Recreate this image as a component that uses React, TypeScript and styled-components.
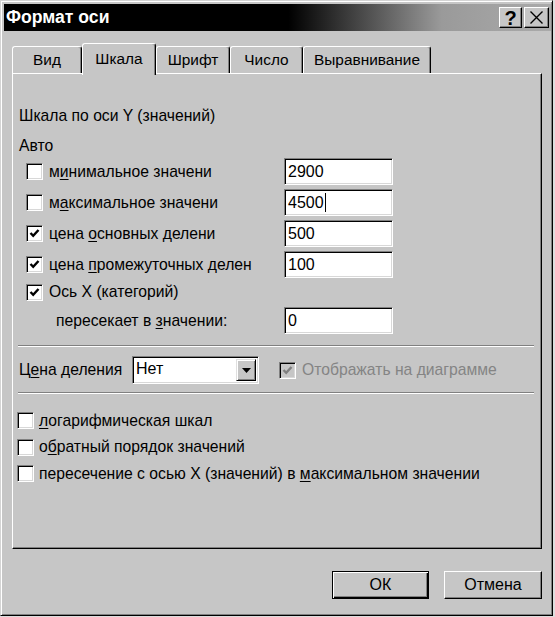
import React from 'react';
import styled, { createGlobalStyle } from 'styled-components';

const FONT = `"Liberation Sans", Arial, sans-serif`;
const BG = '#c6c6c6';

const Global = createGlobalStyle`
  html, body { margin: 0; padding: 0; background: #dedede; }
  body { font-family: ${FONT}; }
  #root { width: 555px; height: 617px; }
`;

const Window = styled.div`
  box-sizing: border-box;
  width: 553px;
  height: 616px;
  background: ${BG};
  border: 1px solid;
  border-color: #d4d4d4 #000 #000 #d4d4d4;
  box-shadow: inset 1px 1px #fff, inset -1px -1px #808080;
  padding: 3px 1px 2px 3px;
  display: flex;
  flex-direction: column;
  font-family: ${FONT};
  font-size: 15.7px;
  color: #000;
`;

const TitleBar = styled.div`
  height: 27px;
  display: flex;
  align-items: center;
  background: linear-gradient(to right, #000 0%, #000 52%, #9a9a9a 80%, #aaaaaa 100%);
  padding: 0 2px 0 2px;
`;

const TitleText = styled.div`
  flex: 1;
  color: #fff;
  font-weight: bold;
  font-size: 17.6px;
`;

const TitleButtons = styled.div`
  display: flex;
  gap: 2px;
`;

const TitleButton = styled.div<{ $w: number }>`
  box-sizing: border-box;
  width: ${(p) => p.$w}px;
  height: 21px;
  background: ${BG};
  border: 1px solid;
  border-color: #fff #000 #000 #fff;
  box-shadow: inset -1px -1px #808080;
  display: flex;
  align-items: center;
  justify-content: center;
  font-weight: bold;
  font-size: 20px;
  line-height: 1;
`;

const TabRow = styled.div`
  display: flex;
  align-items: flex-end;
  margin: 12px 0 0 8px;
  height: 30px;
  position: relative;
  z-index: 1;
`;

const Tab = styled.div<{ $w: number; $active?: boolean }>`
  box-sizing: border-box;
  width: ${(p) => p.$w}px;
  height: ${(p) => (p.$active ? 32 : 27)}px;
  margin-bottom: ${(p) => (p.$active ? -2 : 0)}px;
  background: ${BG};
  border-top: 1px solid #fff;
  border-left: 1px solid #fff;
  border-right: 1px solid #000;
  box-shadow: inset -1px 0 #808080;
  border-radius: 3px 3px 0 0;
  display: flex;
  align-items: center;
  justify-content: center;
  font-size: 15.4px;
  padding-bottom: ${(p) => (p.$active ? 1 : 0)}px;
`;

const Panel = styled.div`
  box-sizing: border-box;
  margin-left: 8px;
  width: 530px;
  height: 476px;
  border: 1px solid;
  border-color: #fff #000 #000 #fff;
  box-shadow: inset -1px -1px #808080;
  padding: 32px 0 0 4px;
  display: flex;
  flex-direction: column;
`;

const Heading = styled.div<{ $mt?: number }>`
  height: 20px;
  line-height: 20px;
  margin-left: 2px;
  margin-top: ${(p) => p.$mt ?? 0}px;
`;

const Row = styled.div<{ $h?: number; $mt?: number; $ml?: number }>`
  display: flex;
  align-items: center;
  height: ${(p) => p.$h ?? 27}px;
  margin-top: ${(p) => p.$mt ?? 0}px;
  margin-left: ${(p) => p.$ml ?? 0}px;
`;

const Label = styled.span<{ $w?: number; $ml?: number; $disabled?: boolean }>`
  ${(p) => (p.$w ? `width: ${p.$w}px; flex: none;` : '')}
  margin-left: ${(p) => p.$ml ?? 6}px;
  white-space: nowrap;
  color: ${(p) => (p.$disabled ? '#848484' : '#000')};
`;

const U = styled.span`
  text-decoration: underline;
  text-underline-offset: 2px;
`;

const Box = styled.span<{ $disabled?: boolean }>`
  box-sizing: border-box;
  flex: none;
  width: 17px;
  height: 17px;
  border: 1px solid;
  border-color: #808080 #fff #fff #808080;
  box-shadow: inset 1px 1px #000, inset -1px -1px #d8d8d8;
  background: ${(p) => (p.$disabled ? BG : '#fff')};
  display: flex;
  align-items: center;
  justify-content: center;
`;

const Field = styled.div<{ $w?: number }>`
  box-sizing: border-box;
  width: ${(p) => p.$w ?? 109}px;
  height: 27px;
  border: 1px solid;
  border-color: #808080 #fff #fff #808080;
  box-shadow: inset 1px 1px #000, inset -1px -1px #d8d8d8;
  background: #fff;
  padding: 0 3px;
  display: flex;
  align-items: center;
  font-size: 16px;
`;

const Caret = styled.span`
  display: inline-block;
  width: 1px;
  height: 19px;
  background: #000;
  margin-left: 1px;
`;

const Separator = styled.div<{ $mt: number }>`
  height: 0;
  border-top: 1px solid #808080;
  border-bottom: 1px solid #fff;
  margin: ${(p) => p.$mt}px 7px 0 1px;
`;

const Combo = styled.div`
  box-sizing: border-box;
  width: 127px;
  height: 28px;
  flex: none;
  border: 1px solid;
  border-color: #808080 #fff #fff #808080;
  box-shadow: inset 1px 1px #000, inset -1px -1px #d8d8d8;
  background: #fff;
  padding: 2px 2px 2px 3px;
  display: flex;
  align-items: stretch;
`;

const ComboText = styled.span`
  flex: 1;
  font-size: 16px;
  line-height: 20px;
`;

const ComboButton = styled.span`
  box-sizing: border-box;
  width: 20px;
  background: ${BG};
  border: 1px solid;
  border-color: #dfdfdf #000 #000 #dfdfdf;
  box-shadow: inset 1px 1px #fff, inset -1px -1px #808080;
  display: flex;
  align-items: center;
  justify-content: center;
`;

const ButtonRow = styled.div`
  display: flex;
  justify-content: flex-end;
  gap: 15px;
  margin: 22px 0 0 8px;
  width: 530px;
`;

const Button = styled.div<{ $default?: boolean; $w: number }>`
  box-sizing: border-box;
  width: ${(p) => p.$w}px;
  height: 28px;
  background: ${BG};
  border: 1px solid;
  border-color: ${(p) => (p.$default ? '#000' : '#fff #000 #000 #fff')};
  box-shadow: ${(p) =>
    p.$default
      ? 'inset 1px 1px #fff, inset -1px -1px #000, inset -2px -2px #808080'
      : 'inset -1px -1px #808080'};
  display: flex;
  align-items: center;
  justify-content: center;
  font-size: 16px;
`;

const Check: React.FC<{ color?: string }> = ({ color = '#000' }) => (
  <svg width="11" height="11" viewBox="0 0 11 11">
    <polyline points="1.5,5 4.2,7.8 9.5,2" fill="none" stroke={color} strokeWidth="2.4" />
  </svg>
);

const CheckBox: React.FC<{ checked?: boolean; disabled?: boolean }> = ({ checked, disabled }) => (
  <Box $disabled={disabled}>{checked && <Check color={disabled ? '#808080' : '#000'} />}</Box>
);

const tabs = [
  { label: 'Вид', w: 70 },
  { label: 'Шкала', w: 74, active: true },
  { label: 'Шрифт', w: 74 },
  { label: 'Число', w: 73 },
  { label: 'Выравнивание', w: 128 },
];

export default function App() {
  return (
    <>
      <Global />
      <Window>
        <TitleBar>
          <TitleText>Формат оси</TitleText>
          <TitleButtons>
            <TitleButton $w={23}>?</TitleButton>
            <TitleButton $w={25}>
              <svg width="15" height="13" viewBox="0 0 15 13">
                <path d="M1.5 0.5 L13.5 12.5 M13.5 0.5 L1.5 12.5" stroke="#000" strokeWidth="1.4" />
              </svg>
            </TitleButton>
          </TitleButtons>
        </TitleBar>

        <TabRow>
          {tabs.map((t) => (
            <Tab key={t.label} $w={t.w} $active={t.active}>
              {t.label}
            </Tab>
          ))}
        </TabRow>

        <Panel>
          <Heading>Шкала по оси Y (значений)</Heading>
          <Heading $mt={10}>Авто</Heading>

          <Row $ml={9} $mt={2}>
            <CheckBox />
            <Label $w={235}>
              м<U>и</U>нимальное значени
            </Label>
            <Field>2900</Field>
          </Row>
          <Row $ml={9} $mt={4}>
            <CheckBox />
            <Label $w={235}>
              м<U>а</U>ксимальное значени
            </Label>
            <Field>
              4500
              <Caret />
            </Field>
          </Row>
          <Row $ml={9} $mt={4}>
            <CheckBox checked />
            <Label $w={235}>
              цена <U>о</U>сновных делени
            </Label>
            <Field>500</Field>
          </Row>
          <Row $ml={9} $mt={4}>
            <CheckBox checked />
            <Label $w={235}>
              цена <U>п</U>ромежуточных делен
            </Label>
            <Field>100</Field>
          </Row>
          <Row $ml={9} $mt={3} $h={22}>
            <CheckBox checked />
            <Label>Ось X (категорий)</Label>
          </Row>
          <Row $ml={9} $mt={4}>
            <Label $w={228} $ml={30}>
              пересекает в <U>з</U>начении:
            </Label>
            <Field>0</Field>
          </Row>

          <Separator $mt={11} />

          <Row $h={28} $mt={9} $ml={2}>
            <Label $w={113} $ml={0}>
              Ц<U>е</U>на деления
            </Label>
            <Combo>
              <ComboText>Нет</ComboText>
              <ComboButton>
                <svg width="9" height="5" viewBox="0 0 9 5">
                  <path d="M0 0 H9 L4.5 5 Z" fill="#000" />
                </svg>
              </ComboButton>
            </Combo>
            <Row $ml={20}>
              <CheckBox checked disabled />
              <Label $disabled>Отображать на диаграмме</Label>
            </Row>
          </Row>

          <Separator $mt={8} />

          <Row $mt={13}>
            <CheckBox />
            <Label $ml={5}>
              <U>л</U>огарифмическая шкал
            </Label>
          </Row>
          <Row $h={26}>
            <CheckBox />
            <Label $ml={5}>
              о<U>б</U>ратный порядок значений
            </Label>
          </Row>
          <Row $h={27}>
            <CheckBox />
            <Label $ml={5}>
              пересечение с осью X (значений) в <U>м</U>аксимальном значении
            </Label>
          </Row>
        </Panel>

        <ButtonRow>
          <Button $default $w={97}>
            ОК
          </Button>
          <Button $w={98}>Отмена</Button>
        </ButtonRow>
      </Window>
    </>
  );
}
